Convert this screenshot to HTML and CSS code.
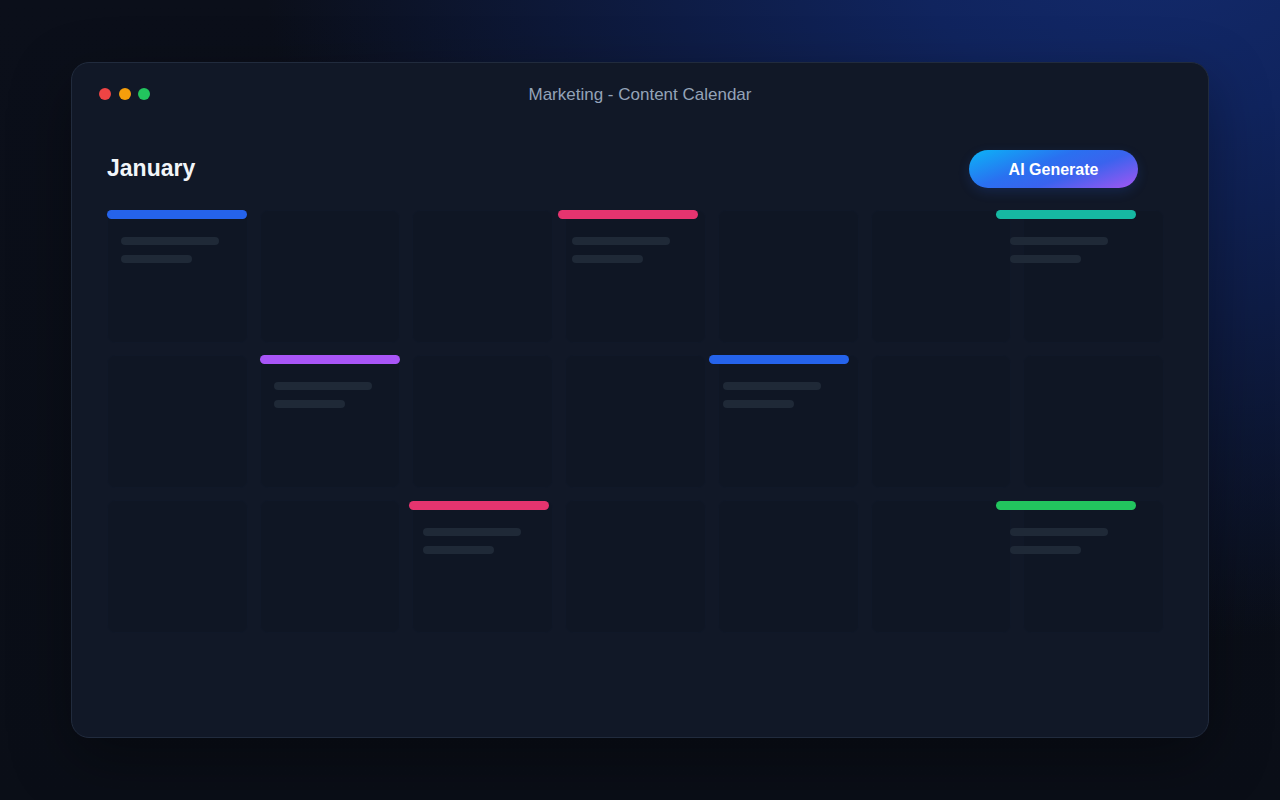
FILE: index.html
```html
<!DOCTYPE html>
<html lang="en">
<head>
<meta charset="utf-8">
<title>Marketing - Content Calendar</title>
<link rel="stylesheet" href="styles.css">
</head>
<body>
<div class="window">
  <div class="titlebar">
    <div class="dots">
      <span class="dot red"></span>
      <span class="dot yellow"></span>
      <span class="dot green"></span>
    </div>
    <div class="title">Marketing - Content Calendar</div>
    <div class="spacer"></div>
  </div>
  <div class="content">
    <div class="toolbar">
      <h1 class="month">January</h1>
      <button class="ai-btn">AI Generate</button>
    </div>
    <div class="grid">
      <div class="cell"></div><div class="cell"></div><div class="cell"></div><div class="cell"></div><div class="cell"></div><div class="cell"></div><div class="cell"></div>
      <div class="cell"></div><div class="cell"></div><div class="cell"></div><div class="cell"></div><div class="cell"></div><div class="cell"></div><div class="cell"></div>
      <div class="cell"></div><div class="cell"></div><div class="cell"></div><div class="cell"></div><div class="cell"></div><div class="cell"></div><div class="cell"></div>

      <div class="event ev-r1c1"><div class="bar blue"></div><div class="line l1"></div><div class="line l2"></div></div>
      <div class="event ev-r1c4"><div class="bar pink"></div><div class="line l1"></div><div class="line l2"></div></div>
      <div class="event ev-r1c7"><div class="bar teal"></div><div class="line l1"></div><div class="line l2"></div></div>
      <div class="event ev-r2c2"><div class="bar purple"></div><div class="line l1"></div><div class="line l2"></div></div>
      <div class="event ev-r2c5"><div class="bar blue"></div><div class="line l1"></div><div class="line l2"></div></div>
      <div class="event ev-r3c3"><div class="bar pink"></div><div class="line l1"></div><div class="line l2"></div></div>
      <div class="event ev-r3c7"><div class="bar green"></div><div class="line l1"></div><div class="line l2"></div></div>
    </div>
  </div>
</div>
</body>
</html>
```

FILE: styles.css
```css
* { box-sizing: border-box; }

html, body {
  margin: 0;
  height: 100%;
}

body {
  font-family: "Liberation Sans", Arial, sans-serif;
  background-color: #0a0e17;
  background-image:
    radial-gradient(ellipse 900px 720px at 1160px -80px, #132a6c 0%, #10245e 28%, #0e1c45 55%, rgba(10,14,23,0) 100%),
    linear-gradient(180deg, #0b0f1a 0%, #0a0e17 100%);
  background-repeat: no-repeat;
  display: flex;
  align-items: center;
  justify-content: center;
}

.window {
  width: 1138px;
  height: 676px;
  background: #111827;
  border: 1px solid #212b3d;
  border-radius: 18px;
  box-shadow: 0 20px 60px rgba(0, 0, 0, 0.35);
  display: flex;
  flex-direction: column;
}

.titlebar {
  height: 62px;
  padding: 0 27px;
  display: grid;
  grid-template-columns: 1fr auto 1fr;
  align-items: center;
}

.dots {
  display: flex;
  gap: 7.5px;
}

.dot {
  width: 12px;
  height: 12px;
  border-radius: 50%;
  display: block;
}
.dot.red { background: #ef4444; }
.dot.yellow { background: #f59e0b; }
.dot.green { background: #22c55e; }

.title {
  color: #94a3b8;
  font-size: 17px;
  padding-top: 2px;
}

.content {
  padding: 25px 44px 0 35px;
}

.toolbar {
  height: 38px;
  padding-right: 26px;
  display: flex;
  align-items: center;
  justify-content: space-between;
  margin-bottom: 22px;
}

.month {
  margin: 0;
  font-size: 23px;
  font-weight: 700;
  color: #f1f5f9;
  line-height: 1;
  margin-top: -2px;
}

.ai-btn {
  width: 169px;
  height: 38px;
  border: none;
  border-radius: 19px;
  background: linear-gradient(160deg, #0bb4f7 0%, #2a70f0 40%, #3a63ee 62%, #a456f2 100%);
  color: #ffffff;
  font-family: "Liberation Sans", Arial, sans-serif;
  font-size: 16px;
  font-weight: 700;
  padding: 2px 0 0 0;
  box-shadow: 0 4px 12px rgba(37, 99, 235, 0.18);
}

.grid {
  position: relative;
  width: 1057px;
  display: grid;
  grid-template-columns: repeat(7, 1fr);
  grid-template-rows: repeat(3, 133px);
  gap: 12px;
}

.cell {
  background: #0f1624;
  border: 1px solid #101828;
  border-radius: 8px;
}

.event {
  position: absolute;
  width: 140px;
}

.ev-r1c1 { left: 0;     top: 0; }
.ev-r1c4 { left: 451px; top: 0; }
.ev-r1c7 { left: 889px; top: 0; }
.ev-r2c2 { left: 153px; top: 145px; }
.ev-r2c5 { left: 602px; top: 145px; }
.ev-r3c3 { left: 302px; top: 291px; }
.ev-r3c7 { left: 889px; top: 291px; }

.bar {
  height: 9px;
  border-radius: 5px;
  margin-bottom: 18px;
}
.bar.blue { background: #2563eb; }
.bar.pink { background: #e5346f; }
.bar.teal { background: #16b8a2; }
.bar.purple { background: #a855f7; }
.bar.green { background: #22c55e; }

.line {
  height: 8px;
  border-radius: 4px;
  background: #1f2937;
  margin-left: 14px;
}
.line.l1 { width: 98px; margin-bottom: 10px; }
.line.l2 { width: 71px; }
```
